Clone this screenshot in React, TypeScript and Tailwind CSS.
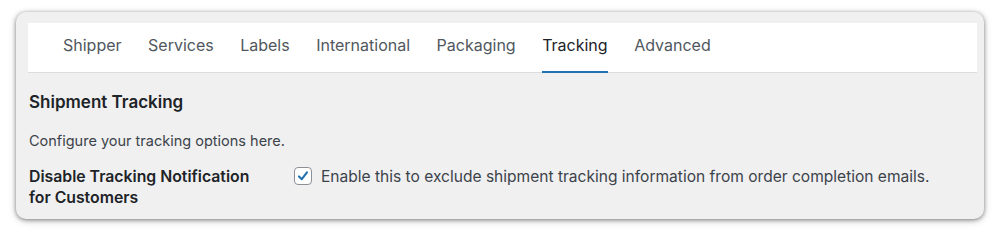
import React from "react";

const tabs = ["Shipper", "Services", "Labels", "International", "Packaging", "Tracking", "Advanced"];

export default function App() {
  return (
    <div className="w-[1000px] h-[232px] bg-white pt-[12px] pl-[16px]" style={{ fontFamily: "Inter, 'Noto Sans', sans-serif" }}>
      <div className="w-[968px] h-[207px] rounded-[10px] bg-[#f0f0f1] shadow-[0_1px_4px_rgba(0,0,0,0.45),0_2px_10px_rgba(0,0,0,0.15)] pt-[11px] pl-[12px] pr-[7px] overflow-hidden">
        <nav className="h-[50px] bg-white border-b border-[#dcdcde] flex items-stretch gap-[26.5px] pl-[35px]">
          {tabs.map((t) => {
            const active = t === "Tracking";
            return (
              <div
                key={t}
                className={
                  active
                    ? "flex items-center text-[16px] text-[#1d2327] border-b-2 border-[#2271b1] pb-[4px] -mb-[1px]"
                    : "flex items-center text-[16px] text-[#50575e] pb-[6px]"
                }
              >
                {t}
              </div>
            );
          })}
        </nav>
        <div className="pl-[1px]">
          <h2 className="text-[17px] font-semibold text-[#1d2327] mt-[18px] leading-[22px]">Shipment Tracking</h2>
          <p className="text-[14.5px] text-[#3c434a] mt-[18px] leading-[20px]">Configure your tracking options here.</p>
          <div className="flex mt-[15px]">
            <div className="w-[265px] text-[15.8px] font-semibold text-[#1d2327] leading-[21px]">
              Disable Tracking Notification
              <br />
              for Customers
            </div>
            <label className="flex items-start gap-[9px] text-[15.55px] text-[#3c434a] leading-[21px]">
              <span className="mt-[1px] w-[18px] h-[18px] rounded-[4px] border border-[#8c8f94] bg-white flex items-center justify-center">
                <svg viewBox="0 0 20 20" className="w-[16px] h-[16px]">
                  <path d="M5 10.5 L8.5 14 L15 5.5" fill="none" stroke="#2271b1" strokeWidth="2.6" strokeLinecap="round" strokeLinejoin="round" />
                </svg>
              </span>
              Enable this to exclude shipment tracking information from order completion emails.
            </label>
          </div>
        </div>
      </div>
    </div>
  );
}
